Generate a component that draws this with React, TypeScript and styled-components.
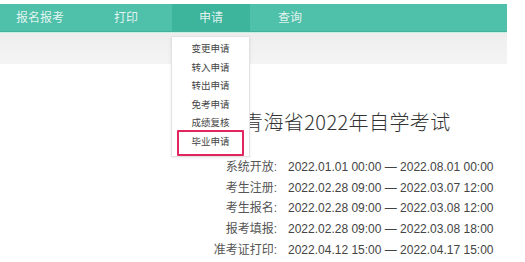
import React from 'react'
import styled, { createGlobalStyle } from 'styled-components'

const GlobalStyle = createGlobalStyle`
  html, body {
    margin: 0;
    padding: 0;
    background: #ffffff;
  }
  body {
    font-family: "Liberation Sans", "Noto Sans CJK SC", sans-serif;
  }
`

type NavTab = { label: string; width: number; active?: boolean }

const tabs: NavTab[] = [
  { label: '报名报考', width: 80 },
  { label: '打印', width: 92 },
  { label: '申请', width: 78, active: true },
  { label: '查询', width: 80 },
]

const menuItems = ['变更申请', '转入申请', '转出申请', '免考申请', '成绩复核', '毕业申请']

const schedule = [
  { label: '系统开放:', time: '2022.01.01 00:00 — 2022.08.01 00:00' },
  { label: '考生注册:', time: '2022.02.28 09:00 — 2022.03.07 12:00' },
  { label: '考生报名:', time: '2022.02.28 09:00 — 2022.03.08 12:00' },
  { label: '报考填报:', time: '2022.02.28 09:00 — 2022.03.08 18:00' },
  { label: '准考证打印:', time: '2022.04.12 15:00 — 2022.04.17 15:00' },
]

export default function App() {
  return (
    <>
      <GlobalStyle />
      <Page>
        <Header>
          <NavBar>
            {tabs.map((tab) => (
              <NavItem key={tab.label} $w={tab.width} $active={!!tab.active}>
                {tab.label}
                {tab.active && (
                  <Dropdown>
                    {menuItems.map((item, i) => (
                      <MenuItem key={item} $marked={i === menuItems.length - 1}>
                        {item}
                      </MenuItem>
                    ))}
                  </Dropdown>
                )}
              </NavItem>
            ))}
          </NavBar>
          <SubBar />
        </Header>

        <Content>
          <Title>青海省2022年自学考试</Title>
          <Schedule>
            {schedule.map((row) => (
              <React.Fragment key={row.label}>
                <RowLabel>{row.label}</RowLabel>
                <RowTime>{row.time}</RowTime>
              </React.Fragment>
            ))}
          </Schedule>
        </Content>
      </Page>
    </>
  )
}

const Page = styled.div`
  width: 525px;
  height: 262px;
  overflow: hidden;
  background: #ffffff;
`

const Header = styled.header`
  width: 507px;
  padding-top: 4px;
`

const NavBar = styled.nav`
  display: flex;
  height: 27px;
  background: #4fc0a9;
  border-bottom: 1px solid #45b19b;
  box-shadow: 0 1px 0 #c6efe4;
`

const NavItem = styled.div<{ $w: number; $active: boolean }>`
  position: relative;
  display: flex;
  align-items: center;
  justify-content: center;
  width: ${({ $w }) => $w}px;
  padding-bottom: 3px;
  box-sizing: border-box;
  background: ${({ $active }) => ($active ? '#3db49c' : 'transparent')};
  color: rgba(255, 255, 255, 0.85);
  font-size: 12px;
`

const Dropdown = styled.ul`
  position: absolute;
  top: 32px;
  left: -1px;
  z-index: 5;
  width: 79px;
  box-sizing: border-box;
  margin: 0;
  padding: 3px 0 4px;
  list-style: none;
  background: #ffffff;
  border: 1px solid #e2e2e2;
  box-shadow: 0 1px 3px rgba(0, 0, 0, 0.08);
`

const MenuItem = styled.li<{ $marked: boolean }>`
  position: relative;
  height: 18.6px;
  line-height: 18.6px;
  text-align: center;
  font-size: 9.5px;
  color: #444444;

  ${({ $marked }) =>
    $marked &&
    `
    &::after {
      content: "";
      position: absolute;
      top: -3px;
      bottom: -4px;
      left: 5px;
      right: 5px;
      border: 2px solid #e0265c;
      border-radius: 1px;
    }
  `}
`

const SubBar = styled.div`
  height: 31px;
  margin-top: 1px;
  background: linear-gradient(#eeeeee, #f4f4f4);
`

const Content = styled.main`
  display: flex;
  flex-direction: column;
  padding-left: 212px;
`

const Title = styled.h1`
  margin: 46px 0 0 31px;
  font-family: "Noto Sans CJK SC", sans-serif;
  font-size: 20px;
  line-height: 24px;
  font-weight: 300;
  letter-spacing: 0.4px;
  color: #333333;
`

const Schedule = styled.div`
  display: grid;
  grid-template-columns: 65px auto;
  column-gap: 11px;
  margin-top: 23px;
`

const RowLabel = styled.span`
  text-align: right;
  font-size: 12px;
  line-height: 20.7px;
  color: #555555;
`

const RowTime = styled.span`
  font-size: 12px;
  line-height: 20.7px;
  color: #444444;
  white-space: nowrap;
`
